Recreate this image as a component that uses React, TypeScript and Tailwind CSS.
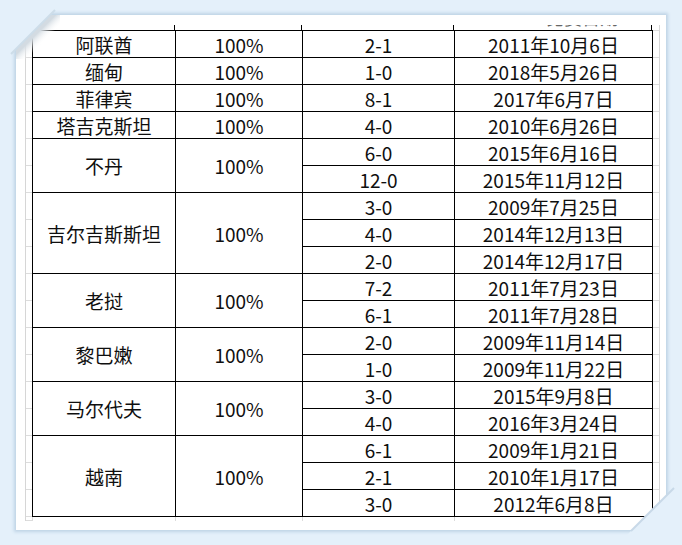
import React from "react";

type Group = { name: string; items: [string, string][] };

const groups: Group[] = [
  { name: "阿联酋", items: [["2-1", "2011年10月6日"]] },
  { name: "缅甸", items: [["1-0", "2018年5月26日"]] },
  { name: "菲律宾", items: [["8-1", "2017年6月7日"]] },
  { name: "塔吉克斯坦", items: [["4-0", "2010年6月26日"]] },
  { name: "不丹", items: [["6-0", "2015年6月16日"], ["12-0", "2015年11月12日"]] },
  {
    name: "吉尔吉斯斯坦",
    items: [
      ["3-0", "2009年7月25日"],
      ["4-0", "2014年12月13日"],
      ["2-0", "2014年12月17日"],
    ],
  },
  { name: "老挝", items: [["7-2", "2011年7月23日"], ["6-1", "2011年7月28日"]] },
  { name: "黎巴嫩", items: [["2-0", "2009年11月14日"], ["1-0", "2009年11月22日"]] },
  { name: "马尔代夫", items: [["3-0", "2015年9月8日"], ["4-0", "2016年3月24日"]] },
  {
    name: "越南",
    items: [
      ["6-1", "2009年1月21日"],
      ["2-1", "2010年1月17日"],
      ["3-0", "2012年6月8日"],
    ],
  },
];

const span: Record<number, string> = {
  1: "row-span-1",
  2: "row-span-2",
  3: "row-span-3",
};

const cell =
  "flex items-center justify-center border-r border-b border-black pt-[2px]";

function Gutter({ side }: { side: "l" | "r" }) {
  const rows = Array.from({ length: 18 });
  return (
    <div
      className={
        "flex w-[7px] flex-col border-[#d6d6d6] " +
        (side === "l" ? "border-l" : "border-r")
      }
    >
      <div className="h-[6px] border-b border-[#dcdcdc]" />
      {rows.map((_, i) => (
        <div key={i} className="h-[27px] border-b border-[#dcdcdc]" />
      ))}
      <div className="h-[4px] border-b border-[#dcdcdc]" />
    </div>
  );
}

export default function App() {
  return (
    <div className="relative h-[545px] w-[682px] overflow-hidden bg-[#e4f0fa] pl-[16px] pt-[15px] font-['Noto_Sans_CJK_SC',sans-serif] text-[19px] text-[#0f0f0f]">
      <div className="relative h-[515px] w-[650px] bg-white pl-[9px] pt-[10px] shadow-[0_0_3px_2px_#bfd4e6]">
        <div className="flex">
          <Gutter side="l" />
          <div className="flex flex-col">
            {/* clipped header row */}
            <div className="flex h-[5px] overflow-hidden">
              <div className="w-[143px] border-r border-black" />
              <div className="w-[127px] border-r border-black" />
              <div className="w-[152px] border-r border-black" />
              <div className="relative w-[198px] overflow-hidden border-r border-black">
                <span className="absolute left-[92px] top-[-19px] whitespace-nowrap text-[18px] leading-[22px] text-[#666]">
                  比赛日期
                </span>
              </div>
            </div>
            <div className="grid auto-rows-[27px] grid-cols-[143px_127px_152px_198px] border-l border-t border-black">
              {groups.map((g) => (
                <React.Fragment key={g.name}>
                  <div className={cell + " col-start-1 " + span[g.items.length]}>
                    {g.name}
                  </div>
                  <div className={cell + " col-start-2 " + span[g.items.length]}>
                    100%
                  </div>
                  {g.items.map(([score, date]) => (
                    <React.Fragment key={date}>
                      <div className={cell + " col-start-3"}>{score}</div>
                      <div className={cell + " col-start-4"}>{date}</div>
                    </React.Fragment>
                  ))}
                </React.Fragment>
              ))}
            </div>
            {/* clipped bottom row */}
            <div className="flex h-[4px] border-l border-[#dcdcdc]">
              <div className="w-[143px] border-r border-[#dcdcdc]" />
              <div className="w-[127px] border-r border-[#dcdcdc]" />
              <div className="w-[152px] border-r border-[#dcdcdc]" />
              <div className="w-[198px] border-r border-[#dcdcdc]" />
            </div>
          </div>
          <Gutter side="r" />
        </div>

        {/* top-left folded corner */}
        <svg
          className="absolute left-[-6px] top-[-6px]"
          width="50"
          height="50"
          viewBox="0 0 50 50"
        >
          <defs>
            <linearGradient id="tl" x1="0" y1="0" x2="1" y2="1">
              <stop offset="0.45" stopColor="#d3dbe2" />
              <stop offset="0.62" stopColor="#ffffff" stopOpacity="0" />
            </linearGradient>
          </defs>
          <polygon points="6,39 39,6 50,6 50,18 18,50 6,50" fill="url(#tl)" />
          <polygon points="0,0 46,0 0,46" fill="#e4f0fa" />
          <line x1="45" y1="1" x2="1" y2="45" stroke="#cddde9" strokeWidth="2" />
        </svg>

        {/* bottom-right page curl */}
        <svg
          className="absolute left-[600px] top-[462px]"
          width="60"
          height="60"
          viewBox="0 0 60 60"
        >
          <defs>
            <linearGradient id="br" x1="0" y1="0" x2="1" y2="1">
              <stop offset="0.4" stopColor="#ffffff" stopOpacity="0" />
              <stop offset="0.58" stopColor="#d2d6d9" />
            </linearGradient>
          </defs>
          <polygon points="18,53 50,21 50,53" fill="url(#br)" />
          <polygon points="60,9 60,60 9,60" fill="#e4f0fa" />
          <line x1="58" y1="11" x2="15" y2="54" stroke="#c8d9e8" strokeWidth="2" />
        </svg>
      </div>
    </div>
  );
}
